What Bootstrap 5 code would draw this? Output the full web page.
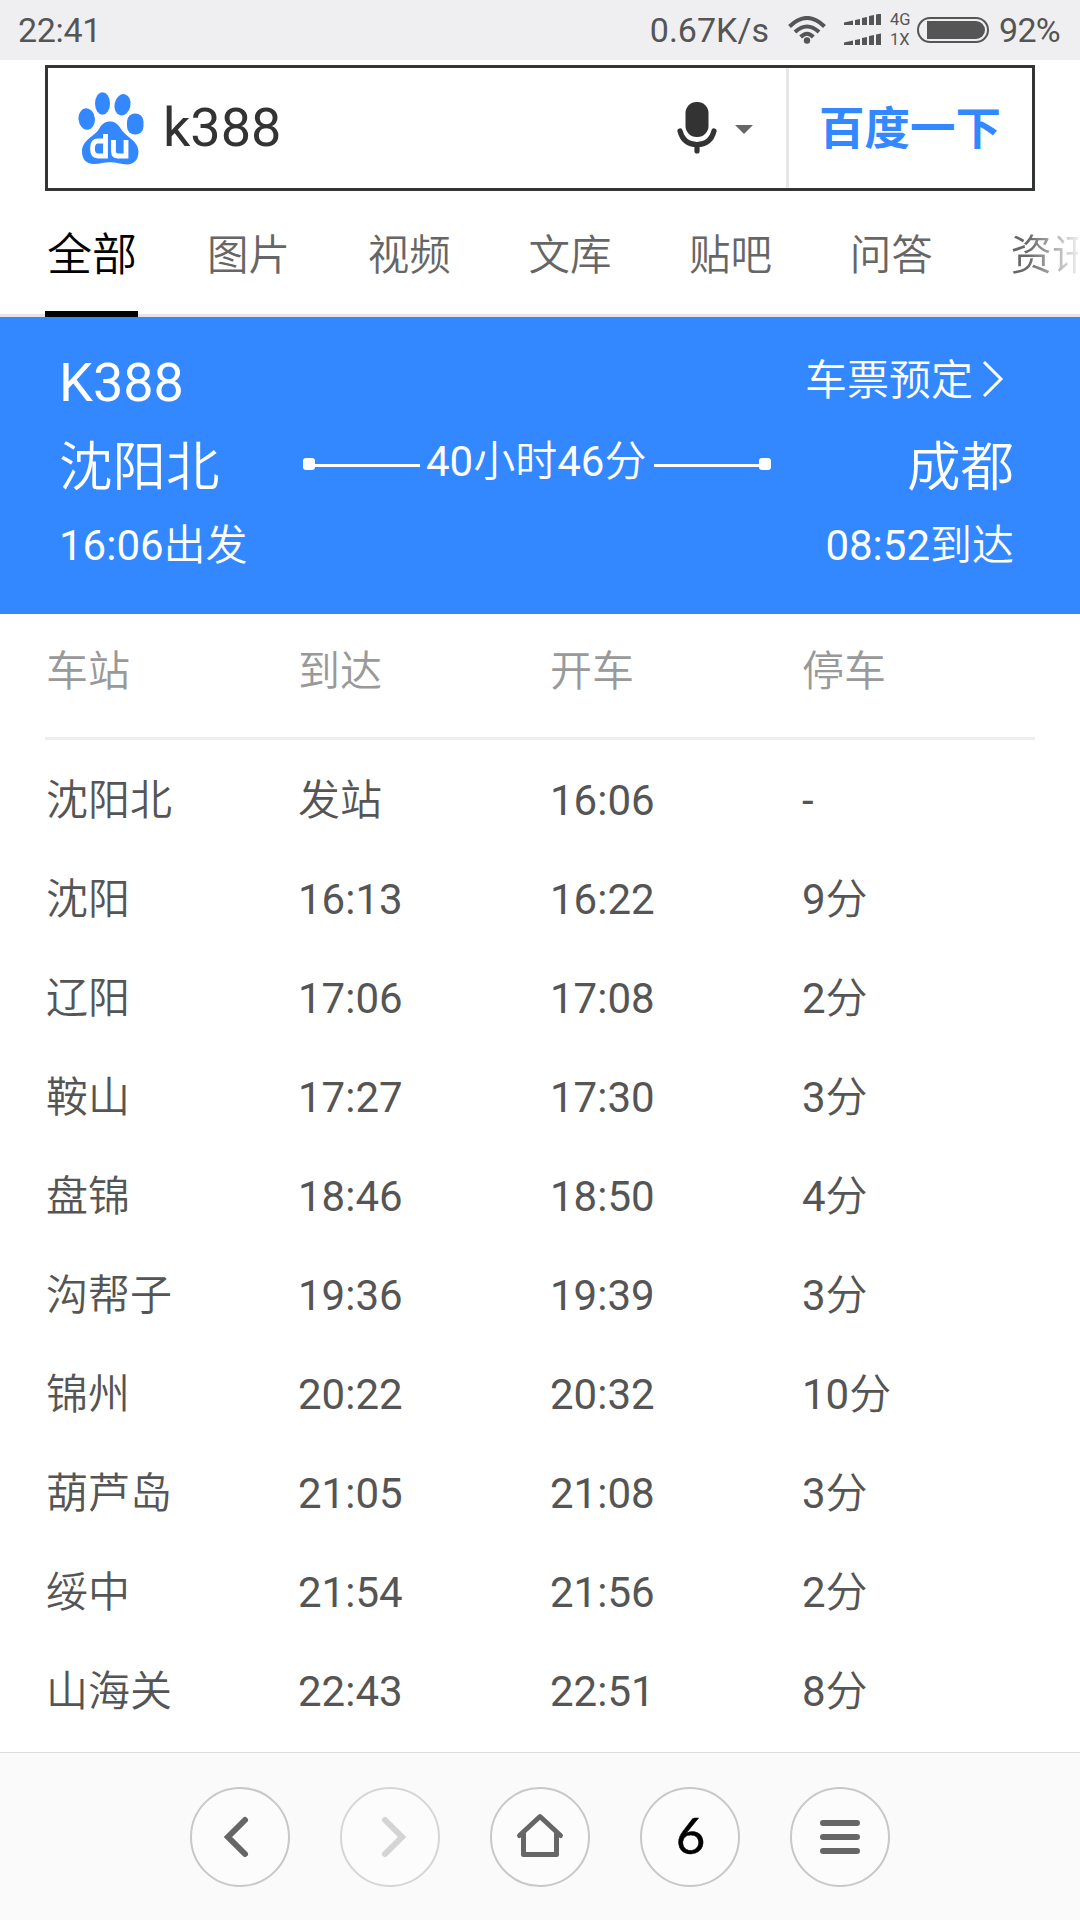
<!DOCTYPE html>
<html lang="zh-CN">
<head>
<meta charset="utf-8">
<meta name="viewport" content="width=device-width, initial-scale=1">
<title>k388 - 百度</title>
<link href="https://cdn.jsdelivr.net/npm/bootstrap@5.3.0/dist/css/bootstrap.min.css" rel="stylesheet">
<style>
  body { font-family: Roboto, "Noto Sans CJK SC", sans-serif; font-size: 42px; color: #555; background: #fff; width: 1080px; height: 1920px; overflow: hidden; }
  svg { display: block; flex: none; }
  .cjk { font-family: Roboto, "Noto Sans CJK SC DemiLight", "Noto Sans CJK SC", sans-serif; }
  .status { height: 60px; background: #efeff1; font-size: 34px; line-height: 60px; padding: 0 17px 0 18px; color: #555; }
  .clock { letter-spacing: -.3px; }
  .speed { margin-right: 19px; letter-spacing: 0; }
  .nets { width: 22px; margin: 0 5px 0 8px; font-size: 16.5px; line-height: 20px; }
  .percent { width: 64px; margin-left: 10px; letter-spacing: -.7px; }
  .search { height: 126px; margin: 5px 45px 0; border: 3px solid #333535; }
  .search .query { font-size: 54px; line-height: 120px; color: #333; margin-left: 19px; }
  .search .go { width: 246px; border-left: 3px solid #e6e6e6; border-radius: 0; font-size: 45.5px; font-weight: 700; color: #38f; padding: 3px 0 0; line-height: 114px; }
  .tabs { height: 126px; padding-left: 45px; box-shadow: inset 0 -3px #e5e5e5; line-height: 129px; }
  .tabs .nav-link { padding: 0; color: #666; font-size: 41.5px; width: 84px; margin-right: 76.7px; white-space: nowrap; height: 126px; flex: none; }
  .tabs .nav-link.active { color: #000; font-size: 45px; width: 93px; margin-right: 69px; padding-left: 2px; border-bottom: 6px solid #000; }
  .tabs .fade-tab { width: 68px; margin-right: 0; background: linear-gradient(90deg, #666 25%, #fff 110%); -webkit-background-clip: text; background-clip: text; color: transparent; }
  .trip { height: 297px; background: #38f; padding: 26px 66px 0 59px; }
  .trip .big { font-size: 54px; line-height: 80px; }
  .trip .order { font-size: 42px; line-height: 76px; }
  .trip .places { height: 84px; }
  .trip .places .big { line-height: 90px; font-size: 53.5px; }
  .trip .origin { width: 244px; }
  .trip .track { height: 82px; }
  .trip .times { line-height: 76px; margin-top: 1px; }
  .dot { width: 12px; height: 12px; border-radius: 3px; background: #fff; }
  .rail { width: 105px; height: 3px; background: #fff; margin-top: 3px; }
  .duration { width: 234px; line-height: 76px; padding: 0 0 4px 6px; }
  .stops { width: 1008px; margin: 0 0 0 45px; table-layout: fixed; color: #555; }
  .stops th, .stops td { padding: 0 0 0 1px; line-height: 100px; height: 99px; border: 0; background: none; color: inherit; }
  .stops td { line-height: 99px; }
  .stops th { font-weight: 400; color: #999; line-height: 116px; height: 123px; vertical-align: top; }
  .rule { height: 3px; background: #eee; margin: 0 45px 11px; }
  .toolbar { height: 168px; margin-top: auto; background: #fafafa; border-top: 1px solid #dcdcdc; gap: 50px; padding-top: 1px; }
  .round { width: 100px; height: 100px; border: 2px solid #c8c8c8; border-radius: 50%; padding: 0; background: #fcfcfc; color: #666; }
  .round.off { border-color: #d6d6d6; color: #d4d4d4; }
  .round.tabcount { font-family: Lato, sans-serif; font-size: 51px; line-height: 92px; color: #000; padding: 0 0 4px 1px; -webkit-text-stroke: .4px #000; }
</style>
</head>
<body class="d-flex flex-column">
<header class="status d-flex align-items-center">
  <span class="clock me-auto">22:41</span>
  <span class="speed">0.67K/s</span>
  <svg width="38" height="28" viewBox="0 0 38 28" fill="none" stroke="#555" stroke-width="4"><path d="M1.500 10.500Q19-6.500 36.500 10.500M7 16Q19 5 31 16M12.700 21Q19 14.500 25.300 21"/><circle cx="19" cy="24.500" r="3.200" fill="#555" stroke="none"/></svg>
  <svg class="ms-3" width="40" height="32" viewBox="-2 0 40 32" fill="#555"><g id="bars"><path d="M0 8.500 9 6.500V11H0zM11 6l5-1v6h-5zM18 4l5-1v8h-5zM25 2l5-1v10h-5zM32 .5l5-1V11h-5z"/></g><use href="#bars" y="20"/></svg>
  <span class="nets d-flex flex-column"><span>4G</span><span>1X</span></span>
  <svg width="72" height="26" viewBox="0 0 72 26"><rect x="1" y="1" width="70" height="24" rx="12" fill="none" stroke="#555" stroke-width="2"/><path d="M10 4h49a9 9 0 0 1 0 18H10z" fill="#555"/></svg>
  <span class="percent">92%</span>
</header>

<div class="search d-flex align-items-center">
  <svg style="margin:1px 0 0 30px" width="66" height="74" viewBox="0 0 66 74" fill="#38f"><ellipse cx="24.500" cy="11.500" rx="7.500" ry="11.200"/><ellipse cx="44.500" cy="12.800" rx="8" ry="10.800" transform="rotate(12 44.500 12.800)"/><ellipse cx="8.700" cy="27" rx="8.200" ry="10.800" transform="rotate(-6 8.700 27)"/><rect x="49" y="21.500" width="16.500" height="21" rx="8"/><path d="M32 29.500C27 29.500 23.500 32 21 37 17 44 4 48 4 59.500 4 68 9 72 16 72 22 72 26 70.300 32 70.300S43 72.500 49 72.500C56 72.500 60.500 67.500 60.500 59.500 60.500 49 47 44 43 37 40 32 37 29.500 32 29.500z"/><path d="M27.500 42v22h-7.500q-5.500 0-5.500-7.500t5.500-7.500h7.500M35.500 48v11.500q0 4.500 4.500 4.500h8V48" fill="none" stroke="#fff" stroke-width="4.800"/></svg>
  <span class="query me-auto">k388</span>
  <svg width="40" height="54" viewBox="0 0 40 54"><rect x="8.500" y="1" width="23" height="35" rx="11" fill="#333"/><path d="M3 30Q6.500 43.500 20 43.500T37 30M20 44v6" fill="none" stroke="#333" stroke-width="5.200" stroke-linecap="round"/></svg>
  <svg style="margin:3px 33px 0 18px" width="18" height="9"><path d="M0 0h18l-9 9z" fill="#666"/></svg>
  <button class="go btn align-self-stretch">百度一下</button>
</div>

<nav class="tabs nav flex-nowrap overflow-hidden cjk flex-shrink-0">
  <a class="nav-link active" href="#">全部</a>
  <a class="nav-link" href="#">图片</a>
  <a class="nav-link" href="#">视频</a>
  <a class="nav-link" href="#">文库</a>
  <a class="nav-link" href="#">贴吧</a>
  <a class="nav-link" href="#">问答</a>
  <a class="nav-link fade-tab" href="#">资讯</a>
</nav>

<section class="trip text-white cjk flex-shrink-0">
  <div class="d-flex justify-content-between">
    <span class="big">K388</span>
    <span class="order d-flex align-items-start">车票预定<svg style="margin:17px 10px 0 9px" width="22" height="38" viewBox="0 0 22 38" fill="none" stroke="#fff" stroke-width="3"><path d="M2 2l17 17L2 36"/></svg></span>
  </div>
  <div class="places d-flex justify-content-between">
    <span class="big origin">沈阳北</span>
    <div class="track d-flex align-items-center me-auto">
      <i class="dot"></i><i class="rail"></i><span class="duration">40小时46分</span><i class="rail"></i><i class="dot"></i>
    </div>
    <span class="big">成都</span>
  </div>
  <div class="times d-flex justify-content-between"><span>16:06出发</span><span>08:52到达</span></div>
</section>

<table class="stops cjk">
  <thead><tr><th>车站</th><th>到达</th><th>开车</th><th>停车</th></tr></thead>
</table>
<div class="rule"></div>
<table class="stops cjk">
  <tbody>
    <tr><td>沈阳北</td><td>发站</td><td>16:06</td><td>-</td></tr>
    <tr><td>沈阳</td><td>16:13</td><td>16:22</td><td>9分</td></tr>
    <tr><td>辽阳</td><td>17:06</td><td>17:08</td><td>2分</td></tr>
    <tr><td>鞍山</td><td>17:27</td><td>17:30</td><td>3分</td></tr>
    <tr><td>盘锦</td><td>18:46</td><td>18:50</td><td>4分</td></tr>
    <tr><td>沟帮子</td><td>19:36</td><td>19:39</td><td>3分</td></tr>
    <tr><td>锦州</td><td>20:22</td><td>20:32</td><td>10分</td></tr>
    <tr><td>葫芦岛</td><td>21:05</td><td>21:08</td><td>3分</td></tr>
    <tr><td>绥中</td><td>21:54</td><td>21:56</td><td>2分</td></tr>
    <tr><td>山海关</td><td>22:43</td><td>22:51</td><td>8分</td></tr>
  </tbody>
</table>

<footer class="toolbar d-flex justify-content-center align-items-center flex-shrink-0">
  <button class="round" aria-label="后退"><svg width="96" height="96" viewBox="2 2 96 96" fill="none" stroke="currentColor" stroke-width="6" stroke-linecap="round"><path d="M55 33 38 50l17 17"/></svg></button>
  <button class="round off" aria-label="前进"><svg width="96" height="96" viewBox="2 2 96 96" fill="none" stroke="currentColor" stroke-width="6" stroke-linecap="round"><path d="M45 33l17 17-17 17"/></svg></button>
  <button class="round" aria-label="主页"><svg width="96" height="96" viewBox="2 2 96 96" fill="none" stroke="currentColor" stroke-width="5" stroke-linecap="round" stroke-linejoin="round"><path d="M29.500 48.500 50 29.500l20.500 19M33.500 46v21.500h33V46"/></svg></button>
  <button class="round tabcount">6</button>
  <button class="round" aria-label="菜单"><svg width="96" height="96" viewBox="2 2 96 96" stroke="currentColor" stroke-width="6" stroke-linecap="round"><path d="M33 36h34M33 50h34M33 64h34"/></svg></button>
</footer>
<script src="https://cdn.jsdelivr.net/npm/bootstrap@5.3.0/dist/js/bootstrap.bundle.min.js"></script>
</body>
</html>
